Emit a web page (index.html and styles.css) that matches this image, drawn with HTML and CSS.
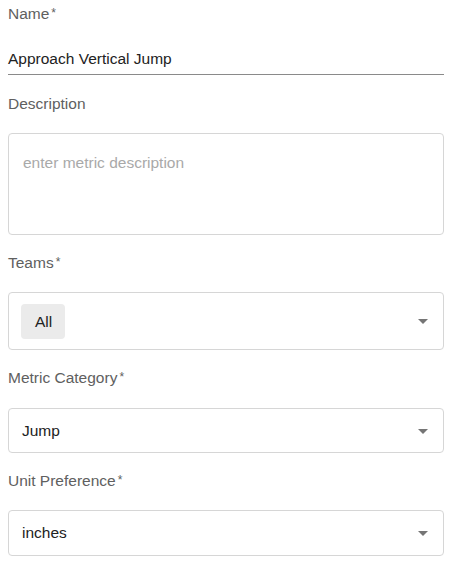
FILE: index.html
```html
<!DOCTYPE html>
<html>
<head>
<meta charset="utf-8">
<link rel="stylesheet" href="styles.css">
</head>
<body>
<form class="form">
  <div class="field field-name">
    <div class="label">Name<span class="req">*</span></div>
    <div class="text-input">Approach Vertical Jump</div>
  </div>
  <div class="field">
    <div class="label">Description</div>
    <div class="textarea"><span class="placeholder">enter metric description</span></div>
  </div>
  <div class="field">
    <div class="label">Teams<span class="req">*</span></div>
    <div class="select select-multi">
      <span class="chip">All</span>
      <span class="arrow"></span>
    </div>
  </div>
  <div class="field">
    <div class="label">Metric Category<span class="req">*</span></div>
    <div class="select select-cat">
      <span class="value">Jump</span>
      <span class="arrow"></span>
    </div>
  </div>
  <div class="field">
    <div class="label">Unit Preference<span class="req">*</span></div>
    <div class="select select-unit">
      <span class="value">inches</span>
      <span class="arrow"></span>
    </div>
  </div>
</form>
</body>
</html>
```
FILE: styles.css
```css
html, body {
  margin: 0;
  padding: 0;
  background: #ffffff;
}
body {
  font-family: "Liberation Sans", Arial, Helvetica, sans-serif;
  font-size: 15.5px;
  line-height: 18px;
  color: #333333;
}
.form {
  padding: 5px 7px 0 8px;
  display: flex;
  flex-direction: column;
}
.field {
  display: flex;
  flex-direction: column;
  gap: 20px;
  margin-bottom: 19px;
}
.field-name {
  gap: 27px;
  margin-bottom: 20px;
}
.label {
  color: #606060;
}
.req {
  margin-left: 2px;
  font-size: 12px;
  vertical-align: top;
  position: relative;
  top: -1px;
}
.text-input {
  color: #222222;
  padding-bottom: 6px;
  border-bottom: 1px solid #8a8a8a;
}
.textarea {
  box-sizing: border-box;
  height: 102px;
  border: 1px solid #d6d6d6;
  border-radius: 4px;
  padding: 20px 14px;
}
.placeholder {
  color: #a9a9a9;
}
.select {
  height: 45px;
  box-sizing: border-box;
  border: 1px solid #d6d6d6;
  border-radius: 4px;
  display: flex;
  align-items: center;
  justify-content: space-between;
  padding: 0 15px 0 13px;
  color: #222222;
}
.select-multi {
  height: 58px;
  padding-left: 12px;
}
.select-cat {
  margin-top: 1px;
}
.select-unit {
  height: 46px;
}
.chip {
  background: #ebebeb;
  border-radius: 4px;
  height: 35px;
  padding: 0 13px 0 14px;
  display: flex;
  align-items: center;
  margin-top: 1px;
}
.arrow {
  width: 0;
  height: 0;
  border-left: 5px solid transparent;
  border-right: 5px solid transparent;
  border-top: 5px solid #757575;
  margin-top: 1px;
}
```
